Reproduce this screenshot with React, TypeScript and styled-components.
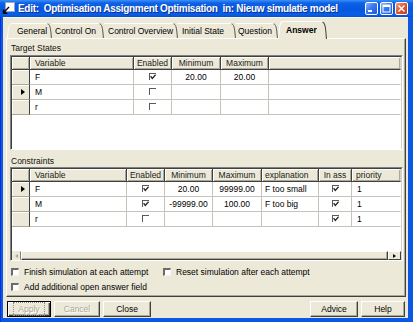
import styled, { createGlobalStyle } from "styled-components";

const FACE = "#ECE9D8";

const GlobalStyle = createGlobalStyle`
  * { box-sizing: border-box; }
  html, body { margin: 0; padding: 0; }
  body {
    width: 413px;
    height: 322px;
    overflow: hidden;
    background: #ffffff;
    font-family: "Liberation Sans", Arial, sans-serif;
    font-size: 8.5px;
    color: #000;
  }
`;

interface TargetRow {
  variable: string;
  enabled: boolean;
  min?: string;
  max?: string;
  current?: boolean;
}

interface ConstraintRow extends TargetRow {
  explanation?: string;
  inAss: boolean;
  priority: string;
}

const targetRows: TargetRow[] = [
  { variable: "F", enabled: true, min: "20.00", max: "20.00" },
  { variable: "M", enabled: false, current: true },
  { variable: "r", enabled: false },
];

const constraintRows: ConstraintRow[] = [
  { variable: "F", enabled: true, min: "20.00", max: "99999.00", explanation: "F too small", inAss: true, priority: "1", current: true },
  { variable: "M", enabled: true, min: "-99999.00", max: "100.00", explanation: "F too big", inAss: true, priority: "1" },
  { variable: "r", enabled: false, inAss: true, priority: "1" },
];

const tabs = [
  { label: "General", w: 45, pad: 5 },
  { label: "Control On", w: 52, pad: 3 },
  { label: "Control Overview", w: 73, pad: 4 },
  { label: "Initial State", w: 59, pad: 5 },
  { label: "Question", w: 42, pad: 2 },
];

const targetCols = "18px 104px 38px 49px 48px 1fr";
const constraintCols = "18px 97px 38px 48px 49px 57px 33px 1fr";

function TitleIcon() {
  return (
    <svg width="13" height="13" viewBox="0 0 13 13">
      <rect x="3.5" y="0.5" width="9" height="9" fill="#fff" stroke="#9aa6c8" />
      <path d="M7 5 L2.6 9.4" stroke="#000" strokeWidth="1.4" />
      <path d="M0.8 7 L0.8 12 L5.8 12 Z" fill="#000" />
    </svg>
  );
}

function TabEdge({ left, dark }: { left?: boolean; dark?: boolean }) {
  return (
    <svg width="5" height="100%" viewBox="0 0 5 15" preserveAspectRatio="none" style={{ flex: "none" }}>
      {left ? (
        <path d="M5 0.5 C2.5 0.5 1.5 2 0.5 15" stroke="#fff" fill="none" />
      ) : (
        <>
          <path d="M0 0.5 L0.8 0.5" stroke="#fff" />
          <path d="M0.5 0.8 C2.6 1.4 3.6 3 4.4 15" stroke={dark ? "#3c3c3c" : "#555"} fill="none" />
        </>
      )}
    </svg>
  );
}

function Check() {
  return (
    <svg width="6" height="6" viewBox="0 0 6 6">
      <path d="M0.6 2.2 L2.3 4.4 L5.6 0.8" stroke="#222" strokeWidth="1.3" fill="none" />
    </svg>
  );
}

export default function App() {
  return (
    <>
      <GlobalStyle />
      <Window>
        <TitleBar>
          <TitleIcon />
          <TitleText>{"Edit:  Optimisation Assignment Optimisation  in: Nieuw simulatie model"}</TitleText>
          <CaptionButtons>
            <CaptionButton>
              <svg width="9" height="9" viewBox="0 0 9 9">
                <rect x="1" y="6" width="4" height="2" fill="#fff" />
              </svg>
            </CaptionButton>
            <CaptionButton>
              <svg width="9" height="9" viewBox="0 0 9 9">
                <rect x="1" y="1" width="7" height="7" fill="none" stroke="#fff" strokeWidth="1" />
                <rect x="1" y="1" width="7" height="2" fill="#fff" />
              </svg>
            </CaptionButton>
            <CaptionButton $close>
              <svg width="9" height="9" viewBox="0 0 9 9">
                <path d="M1.5 1.5 L7.5 7.5 M7.5 1.5 L1.5 7.5" stroke="#fff" strokeWidth="1.5" />
              </svg>
            </CaptionButton>
          </CaptionButtons>
        </TitleBar>

        <Client>
          <TabStrip>
            {tabs.map((t, i) => (
              <Tab key={t.label} $w={t.w}>
                {i === 0 && <TabEdge left />}
                <TabLabel $pad={t.pad}>{t.label}</TabLabel>
                <TabEdge />
              </Tab>
            ))}
            <ActiveTab>
              <TabEdge left />
              <TabLabel $pad={3} $bold>Answer</TabLabel>
              <TabEdge dark />
            </ActiveTab>
          </TabStrip>

          <TabPage>
            <SectionLabel>Target States</SectionLabel>
            <GridFrame $h={95}>
              <GridInner>
                <GridRow $cols={targetCols}>
                  <HeadCell />
                  <HeadCell $align="left">Variable</HeadCell>
                  <HeadCell>Enabled</HeadCell>
                  <HeadCell>Minimum</HeadCell>
                  <HeadCell>Maximum</HeadCell>
                  <HeadCell $last />
                </GridRow>
                {targetRows.map((r) => (
                  <GridRow key={r.variable} $cols={targetCols}>
                    <Indicator>{r.current && <Pointer />}</Indicator>
                    <Cell $align="left">{r.variable}</Cell>
                    <Cell>
                      <GridBox>{r.enabled && <Check />}</GridBox>
                    </Cell>
                    <Cell>{r.min}</Cell>
                    <Cell>{r.max}</Cell>
                    <Cell $last />
                  </GridRow>
                ))}
                <GridFill />
              </GridInner>
            </GridFrame>

            <SectionLabel $gap={6}>Constraints</SectionLabel>
            <GridFrame $h={94} $tight>
              <GridInner>
                <GridRow $cols={constraintCols}>
                  <HeadCell />
                  <HeadCell $align="left">Variable</HeadCell>
                  <HeadCell>Enabled</HeadCell>
                  <HeadCell>Minimum</HeadCell>
                  <HeadCell>Maximum</HeadCell>
                  <HeadCell $align="left" $pad={3}>explanation</HeadCell>
                  <HeadCell>In ass</HeadCell>
                  <HeadCell $align="left" $pad={4} $last>priority</HeadCell>
                </GridRow>
                {constraintRows.map((r) => (
                  <GridRow key={r.variable} $cols={constraintCols}>
                    <Indicator>{r.current && <Pointer />}</Indicator>
                    <Cell $align="left">{r.variable}</Cell>
                    <Cell>
                      <GridBox>{r.enabled && <Check />}</GridBox>
                    </Cell>
                    <Cell>{r.min}</Cell>
                    <Cell>{r.max}</Cell>
                    <Cell $align="left" $pad={3}>{r.explanation}</Cell>
                    <Cell>
                      <GridBox>{r.inAss && <Check />}</GridBox>
                    </Cell>
                    <Cell $align="left" $pad={5} $last>{r.priority}</Cell>
                  </GridRow>
                ))}
                <GridFill />
                <ScrollBar>
                  <ScrollButton>
                    <ArrowLeft />
                  </ScrollButton>
                  <ScrollThumb />
                  <ScrollButton $boxed>
                    <ArrowRight />
                  </ScrollButton>
                </ScrollBar>
              </GridInner>
            </GridFrame>

            <CheckLine $gap={5}>
              <CheckItem $w={152}>
                <CheckBox />
                <span>Finish simulation at each attempt</span>
              </CheckItem>
              <CheckItem>
                <CheckBox />
                <span>Reset simulation after each attempt</span>
              </CheckItem>
            </CheckLine>
            <CheckLine $gap={3}>
              <CheckItem>
                <CheckBox />
                <span>Add additional open answer field</span>
              </CheckItem>
            </CheckLine>
          </TabPage>

          <ButtonBar>
            <PushButton $w={44} $default disabled>
              <FocusText>Apply</FocusText>
            </PushButton>
            <PushButton $w={46} disabled>
              Cancel
            </PushButton>
            <PushButton $w={48}>Close</PushButton>
            <Spacer />
            <PushButton $w={48}>Advice</PushButton>
            <PushButton $w={44}>Help</PushButton>
          </ButtonBar>
        </Client>
      </Window>
    </>
  );
}

const Window = styled.div`
  width: 413px;
  height: 322px;
  display: flex;
  flex-direction: column;
  background: #0a58e4;
  border-left: 1px solid #0831d9;
`;

const TitleBar = styled.div`
  height: 17px;
  flex: none;
  display: flex;
  align-items: center;
  padding: 0 5px 0 2px;
  margin-left: -1px;
  background: linear-gradient(180deg, #3d8ff6 0%, #0c62e6 18%, #0558e0 55%, #0a5ee6 85%, #0650d2 100%);
`;

const TitleText = styled.div`
  flex: 1;
  margin-left: 3px;
  color: #fff;
  font-weight: bold;
  font-size: 10px;
  letter-spacing: -0.3px;
  line-height: 17px;
  white-space: pre;
  overflow: hidden;
  text-shadow: 1px 1px 0 #0b2e8e;
`;

const CaptionButtons = styled.div`
  display: flex;
  gap: 2px;
`;

const CaptionButton = styled.div<{ $close?: boolean }>`
  width: 13px;
  height: 13px;
  border: 1px solid #fff;
  border-radius: 2px;
  display: flex;
  align-items: center;
  justify-content: center;
  background: ${(p) =>
    p.$close
      ? "linear-gradient(135deg, #f2a386 0%, #e35b34 45%, #c73f1b 100%)"
      : "linear-gradient(135deg, #8ab8fb 0%, #3a7af0 45%, #1f58da 100%)"};
`;

const Client = styled.div`
  flex: 1;
  margin: 0 5px 4px 2px;
  background: ${FACE};
  border-top: 1px solid #f7f6f0;
  display: flex;
  flex-direction: column;
`;

const TabStrip = styled.div`
  height: 20px;
  flex: none;
  display: flex;
  align-items: flex-end;
  padding-left: 4px;
`;

const Tab = styled.div<{ $w: number }>`
  width: ${(p) => p.$w}px;
  height: 15px;
  flex: none;
  display: flex;
`;

const ActiveTab = styled.div`
  width: 49px;
  height: 18px;
  flex: none;
  display: flex;
  margin-bottom: -1px;
  position: relative;
  z-index: 1;
  background: ${FACE};
`;

const TabLabel = styled.span<{ $pad: number; $bold?: boolean }>`
  flex: 1;
  display: flex;
  align-items: center;
  padding-left: ${(p) => p.$pad}px;
  padding-bottom: ${(p) => (p.$bold ? 2 : 0)}px;
  border-top: 1px solid #fff;
  white-space: nowrap;
  font-weight: ${(p) => (p.$bold ? "bold" : "normal")};
`;

const TabPage = styled.div`
  height: 259px;
  flex: none;
  margin: 0 2px 0 3px;
  padding: 4px 2px 0 3px;
  border-top: 1px solid #fff;
  border-left: 1px solid #fff;
  border-right: 1px solid #404040;
  border-bottom: 1px solid #404040;
  box-shadow: inset -1px -1px 0 #aca899;
  display: flex;
  flex-direction: column;
`;

const SectionLabel = styled.div<{ $gap?: number }>`
  height: 10px;
  line-height: 10px;
  margin: ${(p) => p.$gap ?? 0}px 0 ${(p) => (p.$gap ? 1 : 2)}px 1px;
  color: #111;
`;

const GridFrame = styled.div<{ $h: number; $tight?: boolean }>`
  height: ${(p) => p.$h}px;
  flex: none;
  border: 1px solid;
  border-color: #808080 #fff #fff #808080;
  display: flex;
`;

const GridInner = styled.div`
  flex: 1;
  display: flex;
  flex-direction: column;
  overflow: hidden;
  background: #fff;
  border-top: 1px solid #404040;
  border-left: 1px solid #404040;
  border-right: 1px solid #d4d0c8;
`;

const GridRow = styled.div<{ $cols: string }>`
  display: grid;
  grid-template-columns: ${(p) => p.$cols};
  flex: none;
`;

const HeadCell = styled.div<{ $align?: "left" | "center"; $pad?: number; $last?: boolean }>`
  height: 13px;
  display: flex;
  align-items: center;
  justify-content: ${(p) => (p.$align === "left" ? "flex-start" : "center")};
  padding-left: ${(p) => (p.$align === "left" ? p.$pad ?? 5 : 0)}px;
  background: ${FACE};
  color: #1a1a1a;
  white-space: nowrap;
  border-right: 1px solid ${(p) => (p.$last ? "#d4d0c8" : "#404040")};
  border-bottom: 1px solid #404040;
  box-shadow: inset 1px 1px 0 #fff, inset -1px -1px 0 #aca899;
`;

const Indicator = styled.div`
  height: 15px;
  display: flex;
  align-items: center;
  justify-content: flex-end;
  padding-right: 4px;
  background: ${FACE};
  border-right: 1px solid #404040;
  border-bottom: 1px solid #aca899;
  box-shadow: inset 1px 1px 0 #fff;
`;

const Pointer = styled.span`
  width: 0;
  height: 0;
  border-left: 4px solid #000;
  border-top: 3px solid transparent;
  border-bottom: 3px solid transparent;
`;

const Cell = styled.div<{ $align?: "left" | "center"; $pad?: number; $last?: boolean }>`
  height: 15px;
  display: flex;
  align-items: center;
  justify-content: ${(p) => (p.$align === "left" ? "flex-start" : "center")};
  padding-left: ${(p) => (p.$align === "left" ? p.$pad ?? 5 : 0)}px;
  white-space: nowrap;
  overflow: hidden;
  border-right: 1px solid ${(p) => (p.$last ? "transparent" : "#c6c3b8")};
  border-bottom: 1px solid #c6c3b8;
`;

const GridBox = styled.span`
  width: 7px;
  height: 7px;
  margin-top: -2px;
  display: flex;
  align-items: center;
  justify-content: center;
  background: #fff;
  border-top: 1.5px solid #5a5a5a;
  border-left: 1.5px solid #5a5a5a;
`;

const GridFill = styled.div`
  flex: 1;
  background: #fff;
`;

const ScrollBar = styled.div`
  height: 9px;
  flex: none;
  display: grid;
  grid-template-columns: 9px 1fr 13px;
  background: ${FACE};
`;

const ScrollButton = styled.div<{ $boxed?: boolean }>`
  display: flex;
  align-items: center;
  justify-content: center;
  border: 1px solid;
  border-color: ${(p) => (p.$boxed ? "#fff #404040 #404040 #fff" : `${FACE} #808080 ${FACE} ${FACE}`)};
`;

const ScrollThumb = styled.div`
  border: 1px solid;
  border-color: #fff #404040 #404040 #fff;
  box-shadow: inset -1px -1px 0 #aca899;
`;

const ArrowLeft = styled.span`
  width: 0;
  height: 0;
  border-right: 3px solid #aca899;
  border-top: 2.5px solid transparent;
  border-bottom: 2.5px solid transparent;
`;

const ArrowRight = styled.span`
  width: 0;
  height: 0;
  border-left: 3px solid #000;
  border-top: 2.5px solid transparent;
  border-bottom: 2.5px solid transparent;
`;

const CheckLine = styled.div<{ $gap: number }>`
  height: 12px;
  flex: none;
  margin-top: ${(p) => p.$gap}px;
  padding-left: 1px;
  display: flex;
  align-items: center;
`;

const CheckItem = styled.div<{ $w?: number }>`
  width: ${(p) => (p.$w ? `${p.$w}px` : "auto")};
  display: flex;
  align-items: center;
  gap: 5px;
  white-space: nowrap;
`;

const CheckBox = styled.span`
  width: 8px;
  height: 8px;
  flex: none;
  background: #fff;
  border-top: 2px solid #6b6b6b;
  border-left: 2px solid #6b6b6b;
  border-right: 1px solid #f4f3ee;
  border-bottom: 1px solid #f4f3ee;
`;

const ButtonBar = styled.div`
  flex: 1;
  display: flex;
  align-items: flex-start;
  gap: 3px;
  padding: 4px 3px 0 4px;
`;

const Spacer = styled.div`
  flex: 1;
`;

const PushButton = styled.button<{ $w: number; $default?: boolean }>`
  width: ${(p) => p.$w}px;
  height: 16px;
  padding: 0;
  display: flex;
  align-items: center;
  justify-content: center;
  font-family: inherit;
  font-size: 8.5px;
  color: #000;
  background: ${FACE};
  border: 1px solid;
  border-color: ${(p) => (p.$default ? "#000" : "#fff #404040 #404040 #fff")};
  box-shadow: ${(p) =>
    p.$default
      ? "inset 1px 1px 0 #fff, inset -1px -1px 0 #404040, inset -2px -2px 0 #aca899"
      : "inset -1px -1px 0 #aca899"};
  &:disabled {
    color: #aca899;
    text-shadow: 1px 1px 0 #fff;
  }
`;

const FocusText = styled.span`
  padding: 0 3px;
  outline: 1px dotted #8a8a8a;
  outline-offset: 1px;
`;
